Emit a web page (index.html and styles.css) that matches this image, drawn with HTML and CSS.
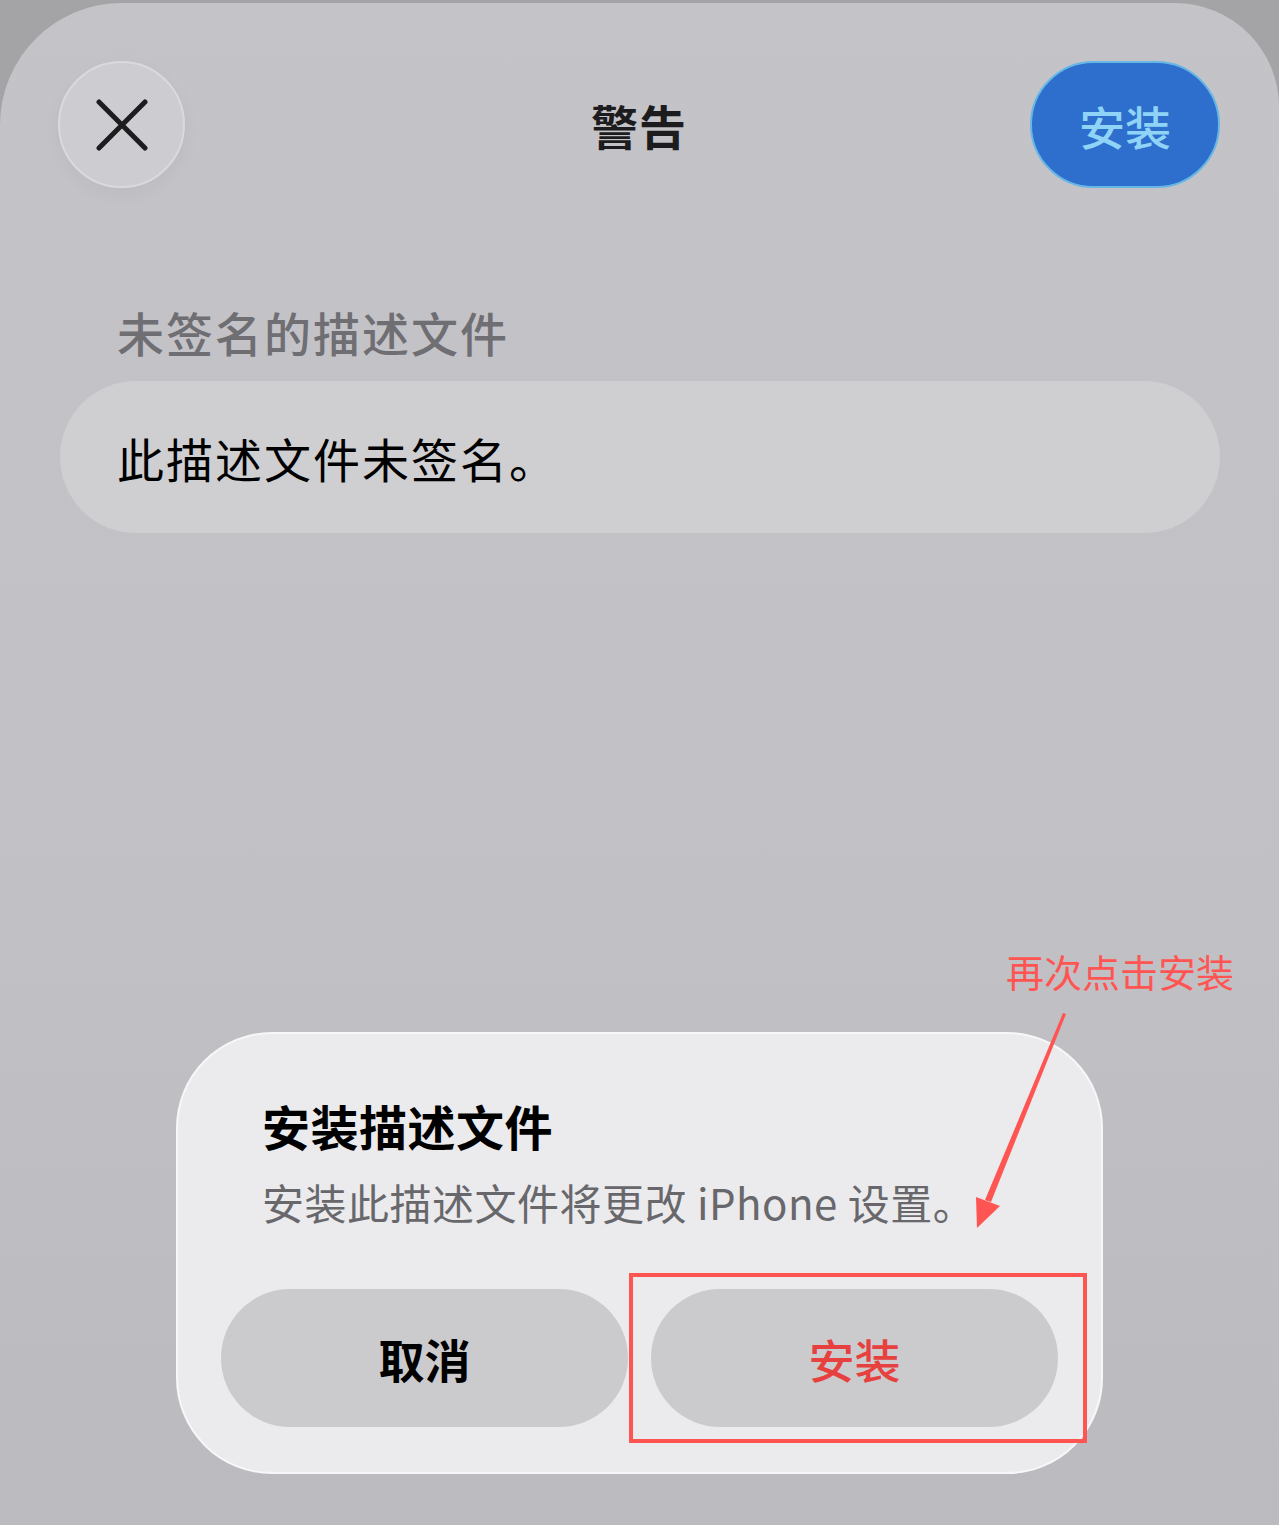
FILE: index.html
```html
<!DOCTYPE html>
<html>
  <head>
    <title>警告</title>
    <link rel="stylesheet" href="styles.css">
  </head>
  <body>
    <div class="sheet">
      <div class="header">
        <button class="close-btn" type="button">
          <svg width="52" height="52" viewBox="0 0 52 52">
            <path d="M3 3 L49 49 M49 3 L3 49" stroke="#1d1d20" stroke-width="5" stroke-linecap="round"/>
          </svg>
        </button>
        <div class="title">警告</div>
        <button class="install-top" type="button">安装</button>
      </div>

      <div class="section-label">未签名的描述文件</div>
      <div class="card">此描述文件未签名。</div>
    </div>

    <!-- 確認ダイアログ -->
    <div class="dialog">
      <div class="dialog-text">
        <div class="dialog-title">安装描述文件</div>
        <div class="dialog-sub">安装此描述文件将更改 iPhone 设置。</div>
      </div>
      <div class="dialog-buttons">
        <button class="dlg-btn" type="button">取消</button>
        <button class="dlg-btn danger" type="button">安装</button>
      </div>
    </div>

    <!-- 注釈 -->
    <div class="note">再次点击安装</div>
    <svg class="arrow" width="1279" height="1525" viewBox="0 0 1279 1525">
      <polygon points="1063,1013 1066,1014 991,1202 985,1200" fill="#ff5552"/>
      <polygon points="977,1228 976,1197 1000,1206" fill="#ff5552"/>
    </svg>
    <div class="highlight"></div>
  </body>
</html>
```

FILE: styles.css
```css
/* 全体 */
html, body {
  margin: 0;
  height: 100%;
}

body {
  background-color: #a4a4a7;
  font-family: "Noto Sans CJK SC", "Noto Sans", sans-serif;
  overflow: hidden;
  position: relative;
  padding-top: 3px;
  box-sizing: border-box;
}

/* シート */
.sheet {
  height: 1522px;
  background: linear-gradient(#c4c3c8, #c1c0c5 60%, #bbbabf);
  border-radius: 122px 104px 0 0;
  padding: 58px 59px 0 58px;
  box-sizing: border-box;
}

/* ヘッダー */
.header {
  display: grid;
  grid-template-columns: 1fr auto 1fr;
  align-items: center;
  height: 127px;
}

.close-btn {
  width: 127px;
  height: 127px;
  border-radius: 50%;
  background-color: #cdccd1;
  border: 2px solid #dad9de;
  box-shadow: 0 6px 20px rgba(0, 0, 0, 0.04);
  display: flex;
  align-items: center;
  justify-content: center;
  padding: 0;
}

.title {
  font-size: 47px;
  font-weight: bold;
  color: #1c1c1e;
  line-height: 1;
  letter-spacing: 1px;
}

.install-top {
  justify-self: end;
  width: 190px;
  height: 127px;
  border-radius: 64px;
  background-color: #2e6ecd;
  border: 2px solid #67b7e6;
  color: #8fd3f6;
  font-family: "Noto Sans CJK SC", sans-serif;
  font-size: 46px;
  font-weight: 500;
  padding: 0;
}

/* セクション */
.section-label {
  margin: 120px 0 0 59px;
  font-size: 47px;
  font-weight: 500;
  color: #6e6e73;
  line-height: 1;
  letter-spacing: 2px;
}

.card {
  margin: 26px 0 0 2px;
  height: 152px;
  border-radius: 76px;
  background-color: #cfcfd1;
  display: flex;
  align-items: center;
  padding-left: 57px;
  font-size: 47px;
  color: #000;
  line-height: 1;
  letter-spacing: 2px;
}

/* ダイアログ */
.dialog {
  position: absolute;
  left: 176px;
  top: 1032px;
  width: 927px;
  height: 442px;
  box-sizing: border-box;
  background-color: #ebebed;
  border: 2px solid #f7f7f9;
  border-radius: 96px;
  padding: 67px 43px 0 43px;
}

.dialog-text {
  padding-left: 41px;
}

.dialog-title {
  font-size: 48px;
  font-weight: bold;
  color: #000;
  line-height: 1;
  letter-spacing: 0.5px;
}

.dialog-sub {
  margin-top: 32px;
  font-size: 42px;
  color: #68686c;
  line-height: 1;
  white-space: nowrap;
  letter-spacing: 0.5px;
}

.dialog-buttons {
  display: flex;
  gap: 23px;
  margin-top: 66px;
}

.dlg-btn {
  flex: 1;
  height: 138px;
  border-radius: 69px;
  background-color: #cbcbce;
  border: none;
  font-family: "Noto Sans CJK SC", sans-serif;
  font-size: 46px;
  font-weight: bold;
  color: #000;
  padding: 0;
}

.dlg-btn.danger {
  color: #e6413f;
  font-weight: 500;
}

/* 注釈 */
.note {
  position: absolute;
  left: 1006px;
  top: 952px;
  font-size: 38px;
  color: #ff5552;
  line-height: 1;
  white-space: nowrap;
}

.arrow {
  position: absolute;
  left: 0;
  top: 0;
  pointer-events: none;
}

.highlight {
  position: absolute;
  left: 629px;
  top: 1273px;
  width: 458px;
  height: 170px;
  box-sizing: border-box;
  border: 4px solid #ff5552;
}
```
